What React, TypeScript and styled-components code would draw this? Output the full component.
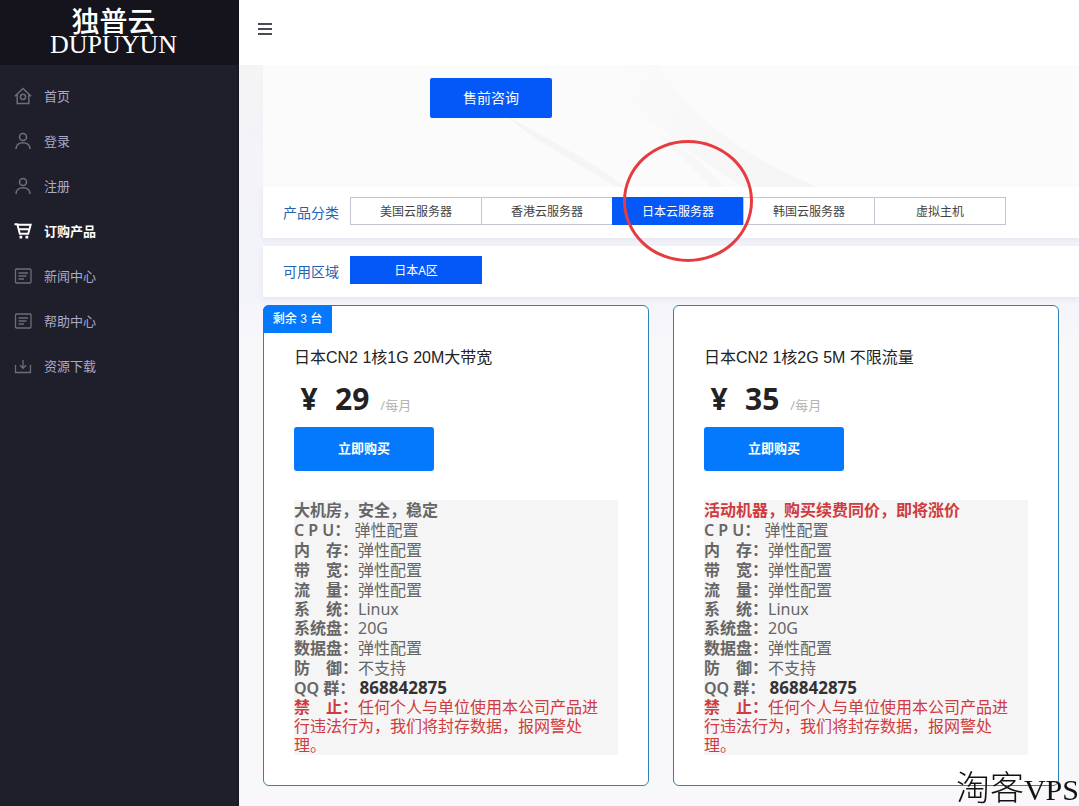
import React from "react";
import styled, { createGlobalStyle, css } from "styled-components";

const sans = `"Noto Sans", "Noto Sans CJK SC", sans-serif`;
const cjkFirst = `"Liberation Sans", "Noto Sans CJK SC", sans-serif`;

const GlobalStyle = createGlobalStyle`
  *, *::before, *::after { box-sizing: border-box; }
  body {
    margin: 0;
    background: #f7f7fa;
    font-family: ${sans};
    color: #222;
  }
  button { font-family: inherit; cursor: pointer; }
  ul { list-style: none; margin: 0; padding: 0; }
  h2, p { margin: 0; }
`;

const Page = styled.div`
  display: flex;
  min-height: 100vh;
`;

const Sidebar = styled.aside`
  flex: 0 0 239px;
  background: #1f1e2b;
  border-right: 2px solid #1a1926;
`;

const Logo = styled.a`
  display: flex;
  flex-direction: column;
  align-items: center;
  height: 65px;
  padding: 6px 12px 0 0;
  margin-right: -2px;
  background: #15131c;
  color: #fff;
  text-decoration: none;
`;

const LogoName = styled.span`
  font: 500 28px/28px "Noto Sans CJK SC", sans-serif;
`;

const LogoLatin = styled.span`
  font: 26px/22px "Liberation Serif", serif;
`;

const Menu = styled.ul`
  padding-top: 8px;
`;

const MenuLink = styled.a<{ $active?: boolean }>`
  display: flex;
  align-items: center;
  gap: 12px;
  height: 45px;
  padding-left: 14px;
  font-size: 13px;
  line-height: 20px;
  font-weight: ${(p) => (p.$active ? 600 : 400)};
  color: ${(p) => (p.$active ? "#fff" : "#a9aac9")};
  text-decoration: none;

  svg {
    width: 18px;
    height: 18px;
    color: ${(p) => (p.$active ? "#fff" : "#6c6d7d")};
  }
`;

const Main = styled.main`
  flex: 1;
  min-width: 0;
`;

const Topbar = styled.header`
  display: flex;
  align-items: center;
  height: 65px;
  padding: 0 18px 8px;
  background: #fff;
`;

const MenuToggle = styled.button`
  display: flex;
  flex-direction: column;
  gap: 3px;
  width: 16px;
  padding: 0 1px;
  border: 0;
  background: none;

  span {
    height: 2px;
    background: #4a4a55;
  }
`;

const Content = styled.div`
  padding-left: 24px;
  background: linear-gradient(#f4f4f5, #f3f3fa 140px, #f3f3fa 230px, #f8f8fa 280px);
`;

const Banner = styled.section`
  position: relative;
  height: 122px;
  padding: 13px 0 0 167px;
  background: #fbfbfb;
  overflow: hidden;
`;

const BannerArt = styled.svg`
  position: absolute;
  top: 0;
  left: 0;
  width: 816px;
  height: 122px;
`;

const ConsultButton = styled.button`
  position: relative;
  width: 122px;
  height: 40px;
  padding: 0 0 2px;
  border: 0;
  border-radius: 2px;
  background: #0458f8;
  color: #fff;
  font-size: 14px;
`;

const FilterPanel = styled.section`
  display: flex;
  min-height: 51px;
  margin-bottom: 8px;
  padding: 10px 20px 13px;
  background: #fff;
  box-shadow: 0 2px 6px rgba(60, 60, 130, 0.08);
`;

const FilterLabel = styled.span`
  flex: 0 0 67px;
  padding-top: 4px;
  font-size: 14px;
  line-height: 24px;
  color: #2362b4;
`;

const Options = styled.ul`
  display: flex;
  padding-left: 1px;
`;

const Option = styled.li`
  position: relative;
  margin-left: -1px;
`;

const OptionButton = styled.button<{ $active?: boolean }>`
  display: block;
  width: 132px;
  height: 28px;
  padding: 0;
  border: 1px solid #c3c3d3;
  background: #fff;
  color: #444;
  font-size: 12px;
  ${(p) =>
    p.$active &&
    css`
      border-color: #0458f8;
      background: #0458f8;
      color: #fff;
    `}
`;

const Marker = styled.span`
  position: absolute;
  z-index: 2;
  top: -57px;
  left: 11px;
  width: 130px;
  height: 122px;
  border: 3px solid #e63c3f;
  border-radius: 50%;
  pointer-events: none;
`;

const Cards = styled.div`
  display: grid;
  grid-template-columns: 1fr 1fr;
  gap: 24px;
  padding: 0 20px 21px 0;
`;

const Card = styled.article`
  position: relative;
  padding: 40px 30px 30px;
  border: 1px solid #2a82b8;
  border-radius: 6px;
  background: #fff;
`;

const Badge = styled.span`
  position: absolute;
  top: -1px;
  left: -1px;
  width: 69px;
  height: 28px;
  border-radius: 6px 0 0 0;
  background: #0479fd;
  color: #fff;
  font: 500 12px/28px ${cjkFirst};
  text-align: center;
`;

const CardTitle = styled.h2`
  font: 400 16px/24px ${cjkFirst};
  color: #222;
`;

const Price = styled.p`
  display: flex;
  align-items: baseline;
  height: 57px;
  font-size: 30px;
  line-height: 58px;
  font-weight: 700;
  color: #222;
`;

const Currency = styled.span`
  width: 30px;
  margin-right: 11px;
  text-align: center;
`;

const Period = styled.span`
  margin-left: 11px;
  font: 400 13px/20px ${sans};
  color: #b4b4b4;
`;

const BuyButton = styled.button`
  display: block;
  width: 140px;
  height: 44px;
  padding: 0 0 4px;
  border: 0;
  border-radius: 3px;
  background: #0479fd;
  color: #fff;
  font-size: 13px;
  font-weight: 700;
`;

const Specs = styled.ul`
  margin-top: 29px;
  padding-right: 8px;
  background: #f5f5f5;
  color: #666;
  font-size: 16px;
`;

const Spec = styled.li<{ $compact?: boolean; $warn?: boolean }>`
  line-height: ${(p) => (p.$compact ? 19 : 20)}px;
  color: ${(p) => (p.$warn ? "#cf3b40" : "inherit")};
`;

const Label = styled.b`
  font-weight: 600;
`;

const Group = styled.b`
  font-size: 17px;
  color: #333;
`;

const Watermark = styled.div`
  position: fixed;
  right: 0;
  bottom: 0;
  z-index: 3;
  font: 300 34px/32px "Liberation Serif", "Noto Sans CJK SC", serif;
  color: #111;
  pointer-events: none;

  span {
    font-size: 30px;
  }
`;

const Icon = ({ width = 1.3, children }: { width?: number; children: React.ReactNode }) => (
  <svg viewBox="0 0 18 18" fill="none" stroke="currentColor" strokeWidth={width} aria-hidden="true">
    {children}
  </svg>
);

const HomeIcon = () => (
  <Icon width={1.5}>
    <path d="M.8 9.200 9 1.500 17.200 9.200M3.200 7.500V16.500H14.800V7.500" />
    <circle cx="9" cy="9.800" r="2.600" />
  </Icon>
);

const UserIcon = () => (
  <Icon width={1.6}>
    <circle cx="9" cy="5" r="3.500" />
    <path d="M2 17c0-4 3-6.300 7-6.300s7 2.300 7 6.300" />
  </Icon>
);

const CartIcon = () => (
  <Icon width={1.9}>
    <path d="M.5 2.200H3.300L5.800 11.800H14.200L16.700 2.800H3.600M5 7.300H15" />
    <path d="M5.500 13.800H8.200V16.500H5.500zM11.500 13.800H14.200V16.500H11.500z" fill="currentColor" stroke="none" />
  </Icon>
);

const NewsIcon = () => (
  <Icon>
    <rect x="1.500" y="2" width="15.500" height="14" rx="1" />
    <path d="M4.500 6H14M4.500 9H12.500M4.500 12H10" />
  </Icon>
);

const DownloadIcon = () => (
  <Icon>
    <path d="M1.500 8V15.500H16.500V8M9 3V11M6 8.300 9 11.300 12 8.300" />
  </Icon>
);

const menu = [
  { text: "首页", icon: <HomeIcon /> },
  { text: "登录", icon: <UserIcon /> },
  { text: "注册", icon: <UserIcon /> },
  { text: "订购产品", icon: <CartIcon />, active: true },
  { text: "新闻中心", icon: <NewsIcon /> },
  { text: "帮助中心", icon: <NewsIcon /> },
  { text: "资源下载", icon: <DownloadIcon /> },
];

const categories = ["美国云服务器", "香港云服务器", "日本云服务器", "韩国云服务器", "虚拟主机"];
const activeCategory = "日本云服务器";

const specs = [
  { label: "C P U： ", value: "弹性配置" },
  { label: "内　存：", value: "弹性配置" },
  { label: "带　宽：", value: "弹性配置" },
  { label: "流　量：", value: "弹性配置" },
  { label: "系　统：", value: "Linux", compact: true },
  { label: "系统盘：", value: "20G", compact: true },
  { label: "数据盘：", value: "弹性配置" },
  { label: "防　御：", value: "不支持" },
];

const products = [
  { title: "日本CN2 1核1G 20M大带宽", price: 29, slogan: "大机房，安全，稳定", stock: 3, promo: false },
  { title: "日本CN2 1核2G 5M 不限流量", price: 35, slogan: "活动机器，购买续费同价，即将涨价", stock: 0, promo: true },
];

const ProductCard = ({ product }: { product: (typeof products)[number] }) => (
  <Card>
    {product.stock > 0 && <Badge>剩余 {product.stock} 台</Badge>}
    <CardTitle>{product.title}</CardTitle>
    <Price>
      <Currency>¥</Currency>
      {product.price}
      <Period>/每月</Period>
    </Price>
    <BuyButton type="button">立即购买</BuyButton>
    <Specs>
      <Spec $warn={product.promo}>
        <Label>{product.slogan}</Label>
      </Spec>
      {specs.map((s) => (
        <Spec key={s.label} $compact={s.compact}>
          <Label>{s.label}</Label>
          {s.value}
        </Spec>
      ))}
      <Spec $compact>
        <Label>QQ 群：</Label> <Group>868842875</Group>
      </Spec>
      <Spec $compact $warn>
        <Label>禁　止：</Label>
        任何个人与单位使用本公司产品进行违法行为，我们将封存数据，报网警处理。
      </Spec>
    </Specs>
  </Card>
);

export default function App() {
  return (
    <>
      <GlobalStyle />
      <Page>
        <Sidebar>
          <Logo href="#">
            <LogoName>独普云</LogoName>
            <LogoLatin>DUPUYUN</LogoLatin>
          </Logo>
          <nav>
            <Menu>
              {menu.map((m) => (
                <li key={m.text}>
                  <MenuLink href="#" $active={m.active}>
                    {m.icon}
                    {m.text}
                  </MenuLink>
                </li>
              ))}
            </Menu>
          </nav>
        </Sidebar>
        <Main>
          <Topbar>
            <MenuToggle type="button" aria-label="菜单">
              <span />
              <span />
              <span />
            </MenuToggle>
          </Topbar>
          <Content>
            <Banner>
              <BannerArt viewBox="0 0 816 122" aria-hidden="true">
                <defs>
                  <linearGradient id="fold" x1="0" y1="0" x2="1" y2="0.3">
                    <stop offset="0" stopColor="#fbfbfb" />
                    <stop offset="1" stopColor="#f5f5f5" />
                  </linearGradient>
                </defs>
                <path d="M240 48C290 78 330 96 362 122H352C320 98 280 84 240 48z" fill="#f5f5f5" />
                <path d="M340 0H395C425 50 480 92 555 122H480C430 90 370 50 340 0z" fill="url(#fold)" />
                <path d="M395 70C425 85 440 98 460 122H448C430 102 410 85 395 70z" fill="#f7f7f7" />
              </BannerArt>
              <ConsultButton type="button">售前咨询</ConsultButton>
            </Banner>
            <FilterPanel>
              <FilterLabel>产品分类</FilterLabel>
              <Options>
                {categories.map((c) => (
                  <Option key={c}>
                    <OptionButton type="button" $active={c === activeCategory}>
                      {c}
                    </OptionButton>
                    {c === activeCategory && <Marker />}
                  </Option>
                ))}
              </Options>
            </FilterPanel>
            <FilterPanel>
              <FilterLabel>可用区域</FilterLabel>
              <Options>
                <Option>
                  <OptionButton type="button" $active>
                    日本A区
                  </OptionButton>
                </Option>
              </Options>
            </FilterPanel>
            <Cards>
              {products.map((p) => (
                <ProductCard key={p.title} product={p} />
              ))}
            </Cards>
          </Content>
        </Main>
      </Page>
      <Watermark>
        淘客<span>VPS</span>
      </Watermark>
    </>
  );
}
